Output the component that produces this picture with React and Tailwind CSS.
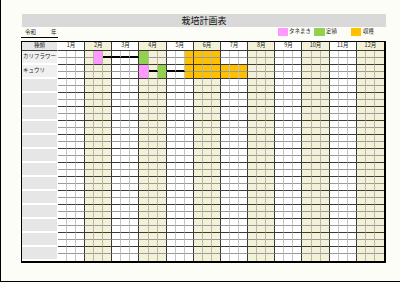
import React from "react";

const PINK = "#ff99ff";
const GREEN = "#92d050";
const ORANGE = "#ffc000";

// fills: row -> {col: color}
const fills = {
  0: { 4: PINK, 9: GREEN, 14: ORANGE, 15: ORANGE, 16: ORANGE, 17: ORANGE },
  1: {
    9: PINK,
    11: GREEN,
    14: ORANGE,
    15: ORANGE,
    16: ORANGE,
    17: ORANGE,
    18: ORANGE,
    19: ORANGE,
    20: ORANGE,
  },
};
const connectors = {
  0: [5, 6, 7, 8],
  1: [10, 12, 13],
};
const labels = ["カリフラワー", "キュウリ"];
const months = ["1月", "2月", "3月", "4月", "5月", "6月", "7月", "8月", "9月", "10月", "11月", "12月"];

function Cell({ r, s, c }) {
  const fill = fills[r] && fills[r][c];
  const isConn = s === 0 && connectors[r] && connectors[r].includes(c);
  const beige = Math.floor(c / 3) % 2 === 1;
  const bg = fill ? fill : beige ? "#f4f1d9" : "#ffffff";
  const lastCol = c === 35;
  const lastRow = r === 14 && s === 1;
  const rightColor = c % 3 === 2 ? "#3a3a3a" : beige ? "#bdb9a0" : "#c4c4c4";
  const bottomColor = isConn ? "#000000" : s === 1 ? "#3a3a3a" : fill && fill !== ORANGE ? fill : "#9a9a9a";
  return (
    <div
      style={{
        backgroundColor: bg,
        borderRightWidth: lastCol ? 0 : 1,
        borderRightColor: rightColor,
        borderBottomWidth: lastRow ? 0 : isConn ? 2 : 1,
        borderBottomColor: bottomColor,
      }}
      className="border-solid"
    />
  );
}

export default function App() {
  const body = [];
  for (let r = 0; r < 15; r++) {
    body.push(
      <div
        key={`l${r}`}
        className={`row-span-2 flex items-center pl-[1px] text-[5.5px] leading-none text-[#222] border-b-2 border-r border-white ${
          r < 2 ? "bg-[#f0f0f0]" : "bg-[#e6e6e6]"
        }`}
      >
        {labels[r] || ""}
      </div>
    );
    for (let s = 0; s < 2; s++) {
      for (let c = 0; c < 36; c++) {
        body.push(<Cell key={`${r}-${s}-${c}`} r={r} s={s} c={c} />);
      }
    }
  }

  return (
    <div
      className="w-[400px] h-[283px] bg-[#fdfdf8] overflow-hidden"
      style={{ fontFamily: '"Noto Sans CJK JP", "Noto Sans", sans-serif' }}
    >
      <div className="w-[400px] h-[282px] border-l border-b border-black flex flex-col pl-[20px]">
        <div className="mt-[14px] ml-[1px] w-[364px] h-[13px] bg-[#d9d9d9] flex items-center justify-center text-[9px] leading-none text-[#111]">
          栽培計画表
        </div>
        <div className="h-[11px] w-[365px] flex items-end">
          <div className="w-[37px] h-[10px] border-b border-black flex items-center text-[5.5px] leading-none text-[#222]">
            <span className="ml-[4px]">令和</span>
            <span className="ml-[15px]">年</span>
          </div>
          <div className="ml-auto flex items-center h-[10px] mb-[1px] text-[5.5px] leading-none text-[#222]">
            <div className="w-[10px] h-[8px] bg-[#ff99ff]" />
            <span className="ml-[1px] w-[25px]">タネまき</span>
            <div className="w-[11px] h-[8px] bg-[#92d050]" />
            <span className="ml-[1px] w-[25px]">定植</span>
            <div className="w-[10px] h-[8px] bg-[#ffc000]" />
            <span className="ml-[2px] w-[23px]">収穫</span>
          </div>
        </div>
        <div className="mt-[3px] w-[365px] h-[222px] border-t border-l border-r-2 border-b-2 border-black bg-white">
          <div
            className="grid w-full h-full"
            style={{
              gridTemplateColumns: "36px repeat(36, 1fr)",
              gridTemplateRows: "9px repeat(30, 7px)",
            }}
          >
            <div className="bg-[#e6e6e6] border-r border-b border-white border-b-[#3a3a3a] flex items-center justify-center text-[5.5px] leading-none text-[#222]">
              種類
            </div>
            {months.map((m, i) => (
              <div
                key={m}
                className={`col-span-3 flex items-center justify-center text-[5.5px] leading-none text-[#222] border-b border-[#3a3a3a] ${
                  i % 2 === 1 ? "bg-[#f4f1d9]" : "bg-white"
                } ${i === 11 ? "" : "border-r"}`}
              >
                {m}
              </div>
            ))}
            {body}
          </div>
        </div>
      </div>
    </div>
  );
}
